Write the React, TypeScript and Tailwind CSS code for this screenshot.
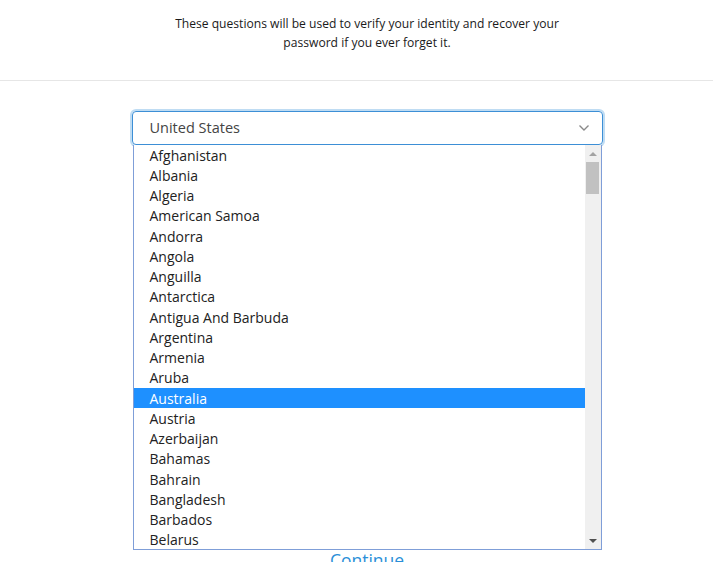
import React from 'react';

const countries = [
    'Afghanistan',
    'Albania',
    'Algeria',
    'American Samoa',
    'Andorra',
    'Angola',
    'Anguilla',
    'Antarctica',
    'Antigua And Barbuda',
    'Argentina',
    'Armenia',
    'Aruba',
    'Australia',
    'Austria',
    'Azerbaijan',
    'Bahamas',
    'Bahrain',
    'Bangladesh',
    'Barbados',
    'Belarus',
];

const ChevronDown = () => (
    <svg width="12" height="8" viewBox="0 0 12 8" fill="none">
        <path d="M1.5 1.5 L6 6 L10.5 1.5" stroke="#8a8a8a" strokeWidth="1.4" />
    </svg>
);

export default function App() {
    return (
        <div className="h-[562px] w-[713px] overflow-hidden bg-white font-['Open_Sans','Noto_Sans',sans-serif]">
            <div className="flex h-[80px] flex-col items-center pl-[21px] pt-[14px] text-center text-[12.1px] leading-[19px] text-[#1a1a1a]">
                <p className="w-[400px]">
                    These questions will be used to verify your identity and recover your password if you ever forget it.
                </p>
            </div>
            <div className="h-px bg-[#e6e6e6]" />

            <div className="flex flex-col items-center pl-[21px] pt-[30px]">
                <div className="relative w-[471px]">
                    <div className="flex h-[34px] items-center justify-between rounded-[4px] border border-[#3d8fd6] px-[17px] text-[14.5px] text-[#444] shadow-[0_0_0_2px_#bfdcf3]">
                        <span>United States</span>
                        <span className="-mr-[5px]"><ChevronDown /></span>
                    </div>

                    <div className="mx-px flex h-[405px] border border-t-0 border-[#7f9ed8] bg-white">
                        <ul className="flex-1 text-[14px] text-[#222]">
                            {countries.map((c) => (
                                <li
                                    key={c}
                                    className={
                                        c === 'Australia'
                                            ? 'flex h-[20.25px] items-center bg-[#1e90ff] pl-[16px] text-white'
                                            : 'flex h-[20.25px] items-center pl-[16px]'
                                    }
                                >
                                    {c}
                                </li>
                            ))}
                        </ul>
                        <div className="flex w-[16px] flex-col bg-[#f0f0f0]">
                            <div className="flex h-[17px] items-center justify-center">
                                <span className="block h-0 w-0 border-x-[4px] border-b-[4px] border-x-transparent border-b-[#a3a3a3]" />
                            </div>
                            <div className="mx-auto h-[32px] w-[13px] bg-[#c1c1c1]" />
                            <div className="flex-1" />
                            <div className="flex h-[17px] items-center justify-center">
                                <span className="block h-0 w-0 border-x-[4px] border-t-[4px] border-x-transparent border-t-[#505050]" />
                            </div>
                        </div>
                    </div>
                </div>
                <div className="mt-[-1px] text-[17.5px] leading-[22px] text-[#2a8fd8]">Continue</div>
            </div>
        </div>
    );
}
